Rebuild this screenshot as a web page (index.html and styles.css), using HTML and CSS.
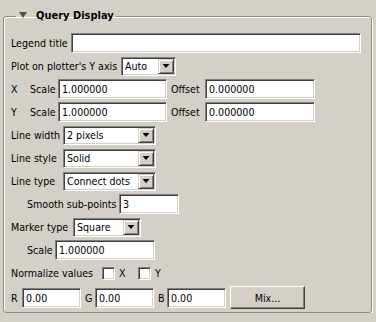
FILE: index.html
```html
<!DOCTYPE html>
<html>

<head>
    <title>Query Display</title>
    <link rel="stylesheet" href="styles.css">
</head>

<body>

    <fieldset class="group">
        <legend class="group-title"><span class="arrow"></span>Query Display</legend>

        <div class="row">
            <label class="lbl w-legend">Legend title</label>
            <input class="field w-290" type="text" value="">
        </div>

        <div class="row">
            <label class="lbl w-plot">Plot on plotter's Y axis</label>
            <div class="combo w-55"><span class="combo-text">Auto</span><span class="combo-btn"></span></div>
        </div>

        <div class="row">
            <label class="lbl w-axis">X</label>
            <label class="lbl w-scale">Scale</label>
            <input class="field w-109" type="text" value="1.000000">
            <label class="lbl w-offset">Offset</label>
            <input class="field w-110" type="text" value="0.000000">
        </div>

        <div class="row">
            <label class="lbl w-axis">Y</label>
            <label class="lbl w-scale">Scale</label>
            <input class="field w-109" type="text" value="1.000000">
            <label class="lbl w-offset">Offset</label>
            <input class="field w-110" type="text" value="0.000000">
        </div>

        <div class="row">
            <label class="lbl w-line">Line width</label>
            <div class="combo w-93"><span class="combo-text">2 pixels</span><span class="combo-btn"></span></div>
        </div>

        <div class="row">
            <label class="lbl w-line">Line style</label>
            <div class="combo w-93"><span class="combo-text">Solid</span><span class="combo-btn"></span></div>
        </div>

        <div class="row">
            <label class="lbl w-line">Line type</label>
            <div class="combo w-93"><span class="combo-text">Connect dots</span><span class="combo-btn"></span></div>
        </div>

        <div class="row indent">
            <label class="lbl w-smooth">Smooth sub-points</label>
            <input class="field w-60" type="text" value="3">
        </div>

        <div class="row">
            <label class="lbl w-marker">Marker type</label>
            <div class="combo w-68"><span class="combo-text">Square</span><span class="combo-btn"></span></div>
        </div>

        <div class="row indent">
            <label class="lbl w-scale2">Scale</label>
            <input class="field w-100" type="text" value="1.000000">
        </div>

        <div class="row">
            <label class="lbl w-normalize">Normalize values</label>
            <span class="check"></span>
            <label class="lbl w-check">X</label>
            <span class="check"></span>
            <label class="lbl w-check">Y</label>
        </div>

        <div class="row">
            <label class="lbl w-r">R</label>
            <input class="field w-59" type="text" value="0.00">
            <label class="lbl w-g">G</label>
            <input class="field w-59" type="text" value="0.00">
            <label class="lbl w-b">B</label>
            <input class="field w-59" type="text" value="0.00">
            <button class="btn">Mix...</button>
        </div>
    </fieldset>

</body>

</html>
```

FILE: styles.css
```css
body { /* фон вікна у стилі класичного Windows */
    margin: 0;
    background-color: #d4d0c8;
    font-family: "DejaVu Sans Condensed", "DejaVu Sans", sans-serif;
    font-stretch: semi-condensed;
    font-size: 10.6px;
    color: #000;
}

.group { /* рамка групи */
    margin: 9px 4px 0 3px;
    padding: 10px 7px 3px 7px;
    border: 1px solid #8c8c8c;
    border-radius: 3px;
    box-shadow: inset 1px 1px #fff, 1px 1px #fff;
}

.group-title { /* заголовок групи */
    margin-left: 5px;
    padding: 0 2px 0 3px;
    font-weight: bold;
    font-size: 11px;
    line-height: 14px;
}

.arrow {
    display: inline-block;
    width: 8px;
    height: 6px;
    margin-right: 9px;
    background-color: #505050;
    clip-path: polygon(0 0, 100% 0, 50% 100%);
    vertical-align: 1px;
}

.row {
    display: flex;
    align-items: center;
    height: 20px;
    margin-bottom: 3px;
}

.row:last-child {
    height: 23px;
    margin-bottom: 0;
}

.indent {
    padding-left: 16px;
}

.lbl {
    white-space: nowrap;
    flex: none;
}

.w-legend { width: 60px; }
.w-plot { width: 110px; }
.w-axis { width: 19px; }
.w-scale { width: 28px; }
.w-offset { width: 34px; padding-left: 4px; }
.w-line { width: 52px; }
.w-smooth { width: 92px; }
.w-marker { width: 62px; }
.w-scale2 { width: 28px; }
.w-normalize { width: 91px; }
.w-check { width: 23px; padding-left: 4px; box-sizing: border-box; }
.w-check:last-child { width: auto; }
.w-r { width: 11px; }
.w-g { width: 10px; padding-left: 4px; }
.w-b { width: 9px; padding-left: 4px; }

.field { /* поле вводу (втиснуте) */
    box-sizing: border-box;
    height: 20px;
    margin: 0;
    padding: 0 3px;
    border: 1px solid;
    border-color: #808080 #fff #fff #808080;
    box-shadow: inset 1px 1px #404040, inset -1px -1px #d4d0c8;
    background-color: #fff;
    font: inherit;
    color: #000;
    outline: none;
    flex: none;
}

.w-290 { width: 290px; }
.w-109 { width: 109px; }
.w-110 { width: 110px; }
.w-60 { width: 60px; }
.w-100 { width: 100px; }
.w-59 { width: 59px; }
.w-55 { width: 55px; }
.w-93 { width: 93px; }
.w-68 { width: 68px; }

.combo { /* випадаючий список */
    display: flex;
    box-sizing: border-box;
    height: 19px;
    padding: 1px;
    border: 1px solid;
    border-color: #808080 #fff #fff #808080;
    box-shadow: inset 1px 1px #404040, inset -1px -1px #d4d0c8;
    background-color: #fff;
    flex: none;
}

.combo-text {
    flex: 1;
    padding-left: 2px;
    line-height: 15px;
    white-space: nowrap;
    overflow: hidden;
}

.combo-btn {
    display: flex;
    align-items: center;
    justify-content: center;
    box-sizing: border-box;
    width: 16px;
    border: 1px solid;
    border-color: #d4d0c8 #404040 #404040 #d4d0c8;
    box-shadow: inset 1px 1px #fff, inset -1px -1px #808080;
    background-color: #d4d0c8;
}

.combo-btn::after {
    content: "";
    width: 7px;
    height: 4px;
    background-color: #000;
    clip-path: polygon(0 0, 100% 0, 50% 100%);
}

.check { /* прапорець */
    box-sizing: border-box;
    width: 13px;
    height: 13px;
    border: 1px solid;
    border-color: #808080 #fff #fff #808080;
    box-shadow: inset 1px 1px #404040, inset -1px -1px #d4d0c8;
    background-color: #fff;
    flex: none;
}

.btn { /* кнопка (опукла) */
    box-sizing: border-box;
    width: 75px;
    height: 23px;
    margin-left: 4px;
    border: 1px solid;
    border-color: #fff #404040 #404040 #fff;
    box-shadow: inset -1px -1px #808080, inset 1px 1px #d4d0c8;
    background-color: #d4d0c8;
    font: inherit;
    color: #000;
    padding: 0;
}
```
